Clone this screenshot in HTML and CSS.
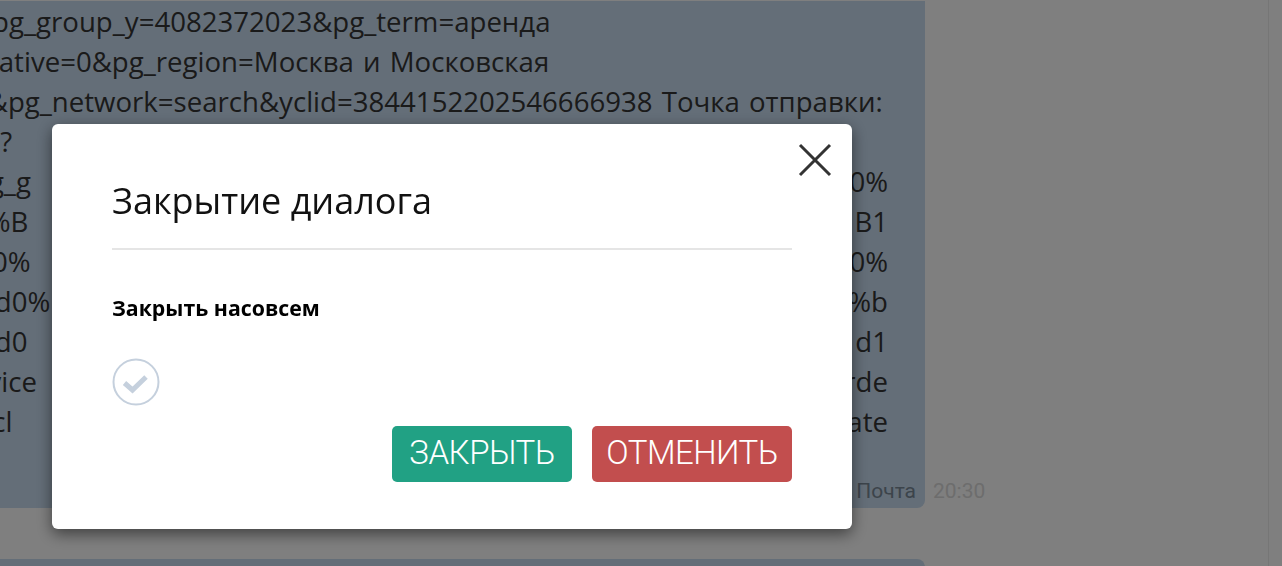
FILE: index.html
```html
<!DOCTYPE html>
<html lang="ru">
<head>
    <meta charset="UTF-8">
    <meta name="viewport" content="width=device-width, initial-scale=1.0">
    <title>Чат</title>
    <link rel="stylesheet" href="styles.css">
</head>
<body>
    <div class="layout">
        <div class="chat">
            <div class="message">
                <div class="bubble">
                    <div class="line">&amp;pg_group_y=4082372023&amp;pg_term=аренда</div>
                    <div class="line">reative=0&amp;pg_region=Москва и Московская</div>
                    <div class="line">0&amp;pg_network=search&amp;yclid=3844152202546666938 Точка отправки:</div>
                    <div class="line">ru?</div>
                    <div class="line split"><span>pg_g</span><span>%D0%B0%D1%80%D0%B5%D0%BD%D0%B4%D0%</span><span>0%</span></div>
                    <div class="line split"><span>0%B</span><span>0%D0%BC%D0%BE%D1%81%D0%BA%D0%B2</span><span>B1</span></div>
                    <div class="line split"><span>D0%</span><span>%D0%BB%D0%B0%D1%81%D1%82%D1%8C%D</span><span>0%</span></div>
                    <div class="line split"><span>%d0%</span><span>%bf%d0%be%d1%87%d1%82%d0%b0%d0%</span><span>%b</span></div>
                    <div class="line split"><span>%d0</span><span>%d0%b1%d0%b5%d1%81%d0%bf%d0%bb%d0</span><span>d1</span></div>
                    <div class="line split"><span>evice</span><span>_type=desktop&amp;utm_source=yan&amp;bo</span><span>rde</span></div>
                    <div class="line split"><span>//cl</span><span>oud.mail.ru/public/template&amp;up</span><span>ate</span></div>
                    <div class="line"></div>
                    <div class="source">Почта</div>
                </div>
                <div class="time">20:30</div>
            </div>
            <div class="message">
                <div class="bubble next"></div>
            </div>
        </div>
        <div class="side"></div>
    </div>

    <div class="overlay"></div>

    <div class="modal">
        <button class="modal-close" aria-label="Закрыть">
            <svg width="34" height="34" viewBox="0 0 34 34">
                <path d="M2 2 L32 32 M32 2 L2 32" stroke="#333" stroke-width="3" fill="none"/>
            </svg>
        </button>
        <h2 class="modal-title">Закрытие диалога</h2>
        <div class="modal-body">
            <div class="label">Закрыть насовсем</div>
            <div class="check">
                <svg width="48" height="48" viewBox="0 0 48 48">
                    <circle cx="24" cy="24" r="22.5" stroke="#c5d0dd" stroke-width="2" fill="none"/>
                    <path d="M12.5 25 L20.5 32 L34 19" stroke="#c5d0dd" stroke-width="5" fill="none"/>
                </svg>
            </div>
        </div>
        <div class="modal-actions">
            <button class="btn btn-green">Закрыть</button>
            <button class="btn btn-red">Отменить</button>
        </div>
    </div>
</body>
</html>
```

FILE: styles.css
```css
body {
    margin: 0;
    height: 100vh;
    overflow: hidden;
    background: #fff;
    font-family: "Open Sans", sans-serif;
}

.layout {
    display: flex;
    height: 100%;
}

.chat {
    flex: 1;
    overflow: hidden;
    padding-top: 1px;
}

.side {
    width: 13px;
    border-left: 1px solid #ececec;
}

.message {
    display: flex;
    align-items: flex-end;
    margin-left: -40px;
    margin-bottom: 51px;
}

.bubble {
    width: 965px;
    box-sizing: border-box;
    padding: 0 37px 7px 12px;
    background: #c8dcf0;
    border-radius: 0 0 8px 0;
    color: #353535;
    font-size: 27.6px;
    line-height: 40px;
    word-spacing: 2px;
}

.bubble.next {
    height: 40px;
    border-radius: 0 8px 0 0;
}

.line {
    height: 40px;
    white-space: nowrap;
}

.split {
    display: flex;
    justify-content: space-between;
    overflow: hidden;
}

.source {
    margin-right: -28px;
    text-align: right;
    font-family: Roboto, sans-serif;
    font-size: 21px;
    line-height: 20px;
    word-spacing: 0;
    color: #788896;
}

.time {
    margin: 0 0 5px 8px;
    font-family: Roboto, sans-serif;
    font-size: 21px;
    color: #dadada;
}

.overlay {
    position: fixed;
    inset: 0;
    background: rgba(0, 0, 0, 0.5);
}

.modal {
    position: fixed;
    left: 52px;
    top: 124px;
    width: 800px;
    box-sizing: border-box;
    padding: 52px 60px 47px;
    background: #fff;
    border-radius: 6px;
    box-shadow: 0 5px 15px rgba(0, 0, 0, 0.5);
}

.modal-close {
    position: absolute;
    top: 19px;
    right: 20px;
    padding: 0;
    border: 0;
    background: none;
    line-height: 0;
    cursor: pointer;
}

.modal-title {
    margin: 0;
    padding-bottom: 22px;
    border-bottom: 2px solid #e5e5e5;
    font-size: 36px;
    font-weight: 400;
    line-height: 50px;
    color: #111;
}

.modal-body {
    padding-top: 44px;
}

.label {
    font-size: 21.3px;
    font-weight: 700;
    line-height: 28px;
    color: #000;
}

.check {
    margin-top: 36px;
    line-height: 0;
}

.modal-actions {
    display: flex;
    justify-content: flex-end;
    gap: 20px;
    margin-top: 20px;
}

.btn {
    height: 56px;
    padding: 0 0 4px;
    border: 0;
    border-radius: 5px;
    color: #fff;
    font-family: Roboto, sans-serif;
    font-size: 33px;
    font-weight: 300;
    letter-spacing: -0.5px;
    text-transform: uppercase;
    cursor: pointer;
}

.btn-green {
    width: 180px;
    background: #21a184;
}

.btn-red {
    width: 200px;
    background: #c24e4e;
}
```
